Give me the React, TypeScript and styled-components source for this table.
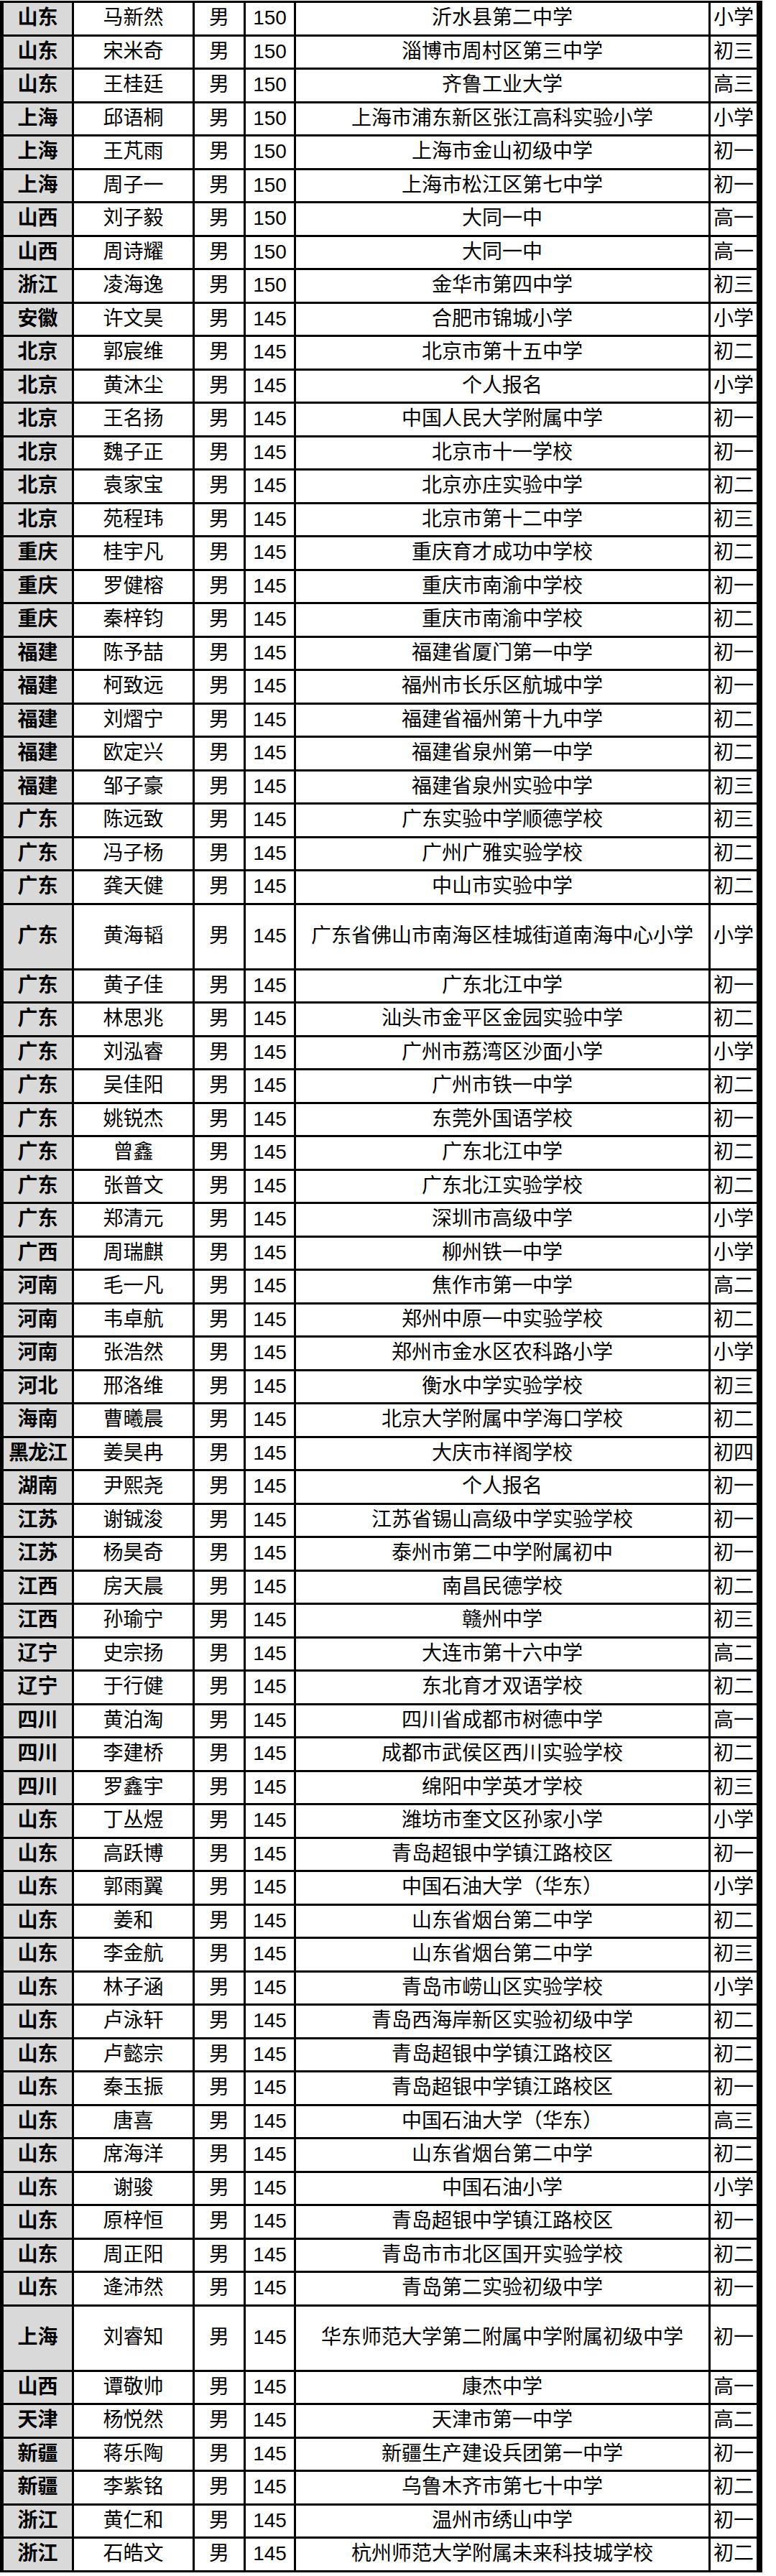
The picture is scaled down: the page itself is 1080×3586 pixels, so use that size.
import React from 'react'
import { styled, createGlobalStyle } from 'styled-components'

const GlobalStyle = createGlobalStyle`
  html, body {
    margin: 0;
    padding: 0;
    background: #fff;
  }
  body {
    font-family: "Liberation Sans", "Noto Sans CJK SC", sans-serif;
    color: #000;
  }
`

type Entry = [string, string, string, string, string, string, boolean?]

const rows: Entry[] = [
  ['山东', '马新然', '男', '150', '沂水县第二中学', '小学'],
  ['山东', '宋米奇', '男', '150', '淄博市周村区第三中学', '初三'],
  ['山东', '王桂廷', '男', '150', '齐鲁工业大学', '高三'],
  ['上海', '邱语桐', '男', '150', '上海市浦东新区张江高科实验小学', '小学'],
  ['上海', '王芃雨', '男', '150', '上海市金山初级中学', '初一'],
  ['上海', '周子一', '男', '150', '上海市松江区第七中学', '初一'],
  ['山西', '刘子毅', '男', '150', '大同一中', '高一'],
  ['山西', '周诗耀', '男', '150', '大同一中', '高一'],
  ['浙江', '凌海逸', '男', '150', '金华市第四中学', '初三'],
  ['安徽', '许文昊', '男', '145', '合肥市锦城小学', '小学'],
  ['北京', '郭宸维', '男', '145', '北京市第十五中学', '初二'],
  ['北京', '黄沐尘', '男', '145', '个人报名', '小学'],
  ['北京', '王名扬', '男', '145', '中国人民大学附属中学', '初一'],
  ['北京', '魏子正', '男', '145', '北京市十一学校', '初一'],
  ['北京', '袁家宝', '男', '145', '北京亦庄实验中学', '初二'],
  ['北京', '苑程玮', '男', '145', '北京市第十二中学', '初三'],
  ['重庆', '桂宇凡', '男', '145', '重庆育才成功中学校', '初二'],
  ['重庆', '罗健榕', '男', '145', '重庆市南渝中学校', '初一'],
  ['重庆', '秦梓钧', '男', '145', '重庆市南渝中学校', '初二'],
  ['福建', '陈予喆', '男', '145', '福建省厦门第一中学', '初一'],
  ['福建', '柯致远', '男', '145', '福州市长乐区航城中学', '初一'],
  ['福建', '刘熠宁', '男', '145', '福建省福州第十九中学', '初二'],
  ['福建', '欧定兴', '男', '145', '福建省泉州第一中学', '初二'],
  ['福建', '邹子豪', '男', '145', '福建省泉州实验中学', '初三'],
  ['广东', '陈远致', '男', '145', '广东实验中学顺德学校', '初三'],
  ['广东', '冯子杨', '男', '145', '广州广雅实验学校', '初二'],
  ['广东', '龚天健', '男', '145', '中山市实验中学', '初二'],
  ['广东', '黄海韬', '男', '145', '广东省佛山市南海区桂城街道南海中心小学', '小学', true],
  ['广东', '黄子佳', '男', '145', '广东北江中学', '初一'],
  ['广东', '林思兆', '男', '145', '汕头市金平区金园实验中学', '初二'],
  ['广东', '刘泓睿', '男', '145', '广州市荔湾区沙面小学', '小学'],
  ['广东', '吴佳阳', '男', '145', '广州市铁一中学', '初二'],
  ['广东', '姚锐杰', '男', '145', '东莞外国语学校', '初一'],
  ['广东', '曾鑫', '男', '145', '广东北江中学', '初二'],
  ['广东', '张普文', '男', '145', '广东北江实验学校', '初二'],
  ['广东', '郑清元', '男', '145', '深圳市高级中学', '小学'],
  ['广西', '周瑞麒', '男', '145', '柳州铁一中学', '小学'],
  ['河南', '毛一凡', '男', '145', '焦作市第一中学', '高二'],
  ['河南', '韦卓航', '男', '145', '郑州中原一中实验学校', '初二'],
  ['河南', '张浩然', '男', '145', '郑州市金水区农科路小学', '小学'],
  ['河北', '邢洛维', '男', '145', '衡水中学实验学校', '初三'],
  ['海南', '曹曦晨', '男', '145', '北京大学附属中学海口学校', '初二'],
  ['黑龙江', '姜昊冉', '男', '145', '大庆市祥阁学校', '初四'],
  ['湖南', '尹熙尧', '男', '145', '个人报名', '初一'],
  ['江苏', '谢铖浚', '男', '145', '江苏省锡山高级中学实验学校', '初一'],
  ['江苏', '杨昊奇', '男', '145', '泰州市第二中学附属初中', '初一'],
  ['江西', '房天晨', '男', '145', '南昌民德学校', '初二'],
  ['江西', '孙瑜宁', '男', '145', '赣州中学', '初三'],
  ['辽宁', '史宗扬', '男', '145', '大连市第十六中学', '高二'],
  ['辽宁', '于行健', '男', '145', '东北育才双语学校', '初二'],
  ['四川', '黄泊淘', '男', '145', '四川省成都市树德中学', '高一'],
  ['四川', '李建桥', '男', '145', '成都市武侯区西川实验学校', '初二'],
  ['四川', '罗鑫宇', '男', '145', '绵阳中学英才学校', '初三'],
  ['山东', '丁丛煜', '男', '145', '潍坊市奎文区孙家小学', '小学'],
  ['山东', '高跃博', '男', '145', '青岛超银中学镇江路校区', '初一'],
  ['山东', '郭雨翼', '男', '145', '中国石油大学（华东）', '小学'],
  ['山东', '姜和', '男', '145', '山东省烟台第二中学', '初二'],
  ['山东', '李金航', '男', '145', '山东省烟台第二中学', '初三'],
  ['山东', '林子涵', '男', '145', '青岛市崂山区实验学校', '小学'],
  ['山东', '卢泳轩', '男', '145', '青岛西海岸新区实验初级中学', '初二'],
  ['山东', '卢懿宗', '男', '145', '青岛超银中学镇江路校区', '初二'],
  ['山东', '秦玉振', '男', '145', '青岛超银中学镇江路校区', '初一'],
  ['山东', '唐喜', '男', '145', '中国石油大学（华东）', '高三'],
  ['山东', '席海洋', '男', '145', '山东省烟台第二中学', '初二'],
  ['山东', '谢骏', '男', '145', '中国石油小学', '小学'],
  ['山东', '原梓恒', '男', '145', '青岛超银中学镇江路校区', '初一'],
  ['山东', '周正阳', '男', '145', '青岛市市北区国开实验学校', '初二'],
  ['山东', '逄沛然', '男', '145', '青岛第二实验初级中学', '初一'],
  ['上海', '刘睿知', '男', '145', '华东师范大学第二附属中学附属初级中学', '初一', true],
  ['山西', '谭敬帅', '男', '145', '康杰中学', '高一'],
  ['天津', '杨悦然', '男', '145', '天津市第一中学', '高二'],
  ['新疆', '蒋乐陶', '男', '145', '新疆生产建设兵团第一中学', '初一'],
  ['新疆', '李紫铭', '男', '145', '乌鲁木齐市第七十中学', '初二'],
  ['浙江', '黄仁和', '男', '145', '温州市绣山中学', '初一'],
  ['浙江', '石皓文', '男', '145', '杭州师范大学附属未来科技城学校', '初二'],
]

const Page = styled.div`
  width: 1080px;
  padding-top: 1px;
`

const Sheet = styled.div`
  width: 1061px;
  box-sizing: border-box;
  border-left: 5px solid #000;
  border-right: 8px solid #000;
  border-top: 3px solid #000;
`

const Row = styled.div<{ $tall?: boolean }>`
  display: grid;
  grid-template-columns: 98px 168px 71px 70px 577px 64px;
  height: ${({ $tall }) => ($tall ? '91px' : '46.5px')};
  box-sizing: border-box;
  border-bottom: 3px solid #000;
`

const Cell = styled.div<{ $head?: boolean; $last?: boolean }>`
  display: flex;
  align-items: center;
  justify-content: center;
  box-sizing: border-box;
  border-right: ${({ $last }) => ($last ? 'none' : '3px solid #000')};
  background: ${({ $head }) => ($head ? '#d9d9d9' : '#fff')};
  font-size: 28px;
  font-weight: ${({ $head }) => ($head ? 700 : 400)};
  line-height: 1;
  white-space: nowrap;
  overflow: hidden;
  padding-bottom: 1px;
`

const Province = styled(Cell)`
  letter-spacing: ${({ children }) => (String(children).length > 2 ? '-1px' : '0')};
`

export default function App() {
  return (
    <Page>
      <GlobalStyle />
      <Sheet>
        {rows.map(([prov, name, sex, score, school, grade, tall], i) => (
          <Row key={i} $tall={tall}>
            <Province $head>{prov}</Province>
            <Cell>{name}</Cell>
            <Cell>{sex}</Cell>
            <Cell>{score}</Cell>
            <Cell>{school}</Cell>
            <Cell $last>{grade}</Cell>
          </Row>
        ))}
      </Sheet>
    </Page>
  )
}
